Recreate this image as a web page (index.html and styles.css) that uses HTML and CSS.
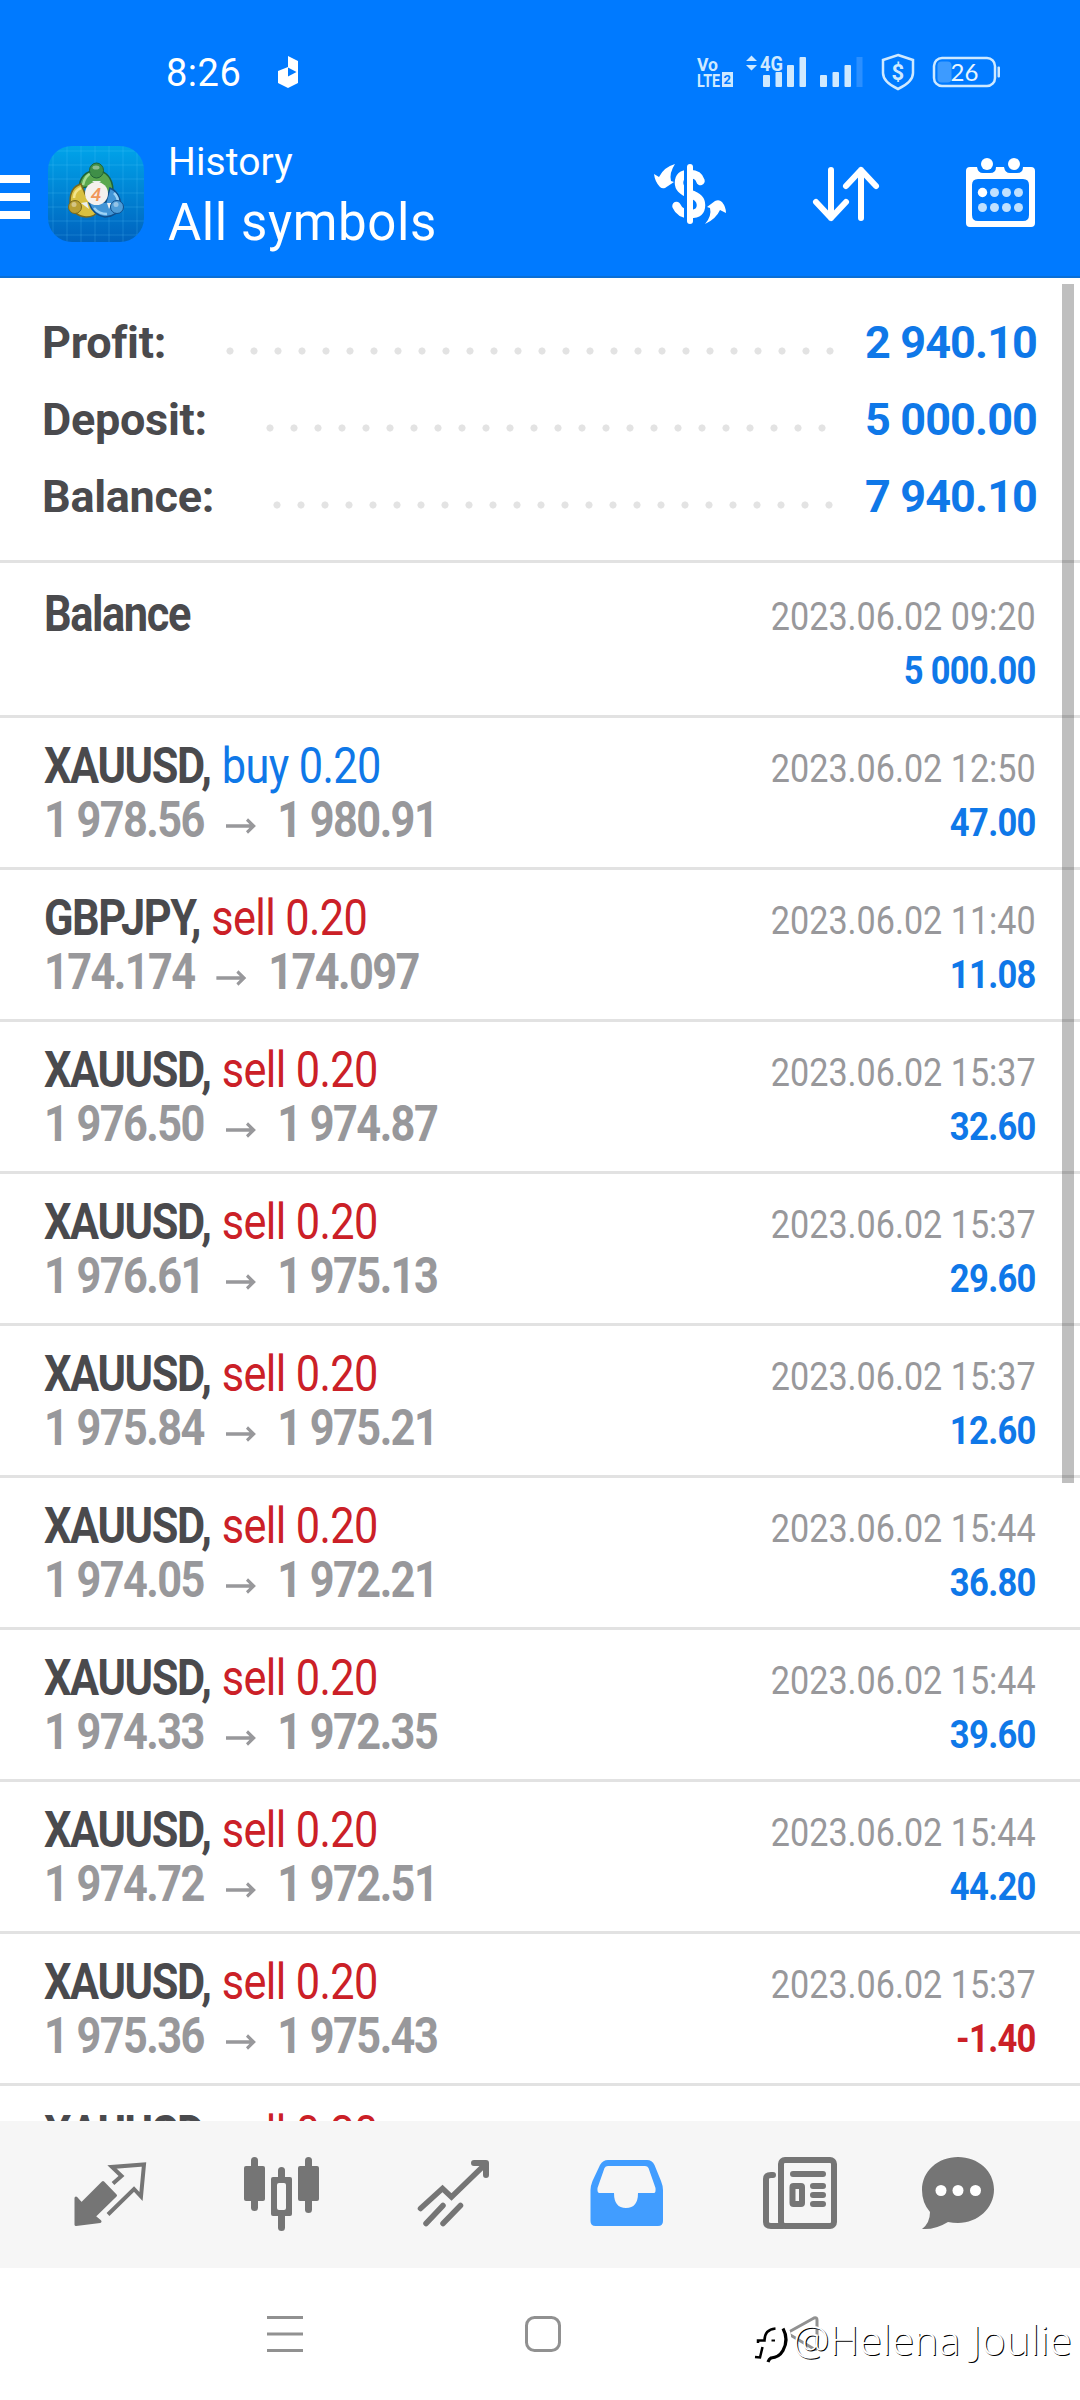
FILE: index.html
```html
<!DOCTYPE html>
<html lang="en">
<head>
<meta charset="utf-8">
<title>History</title>
<link rel="stylesheet" href="styles.css">
</head>
<body>
<div class="screen">
  <header class="header">
    <div class="status">
      <span class="clock">8:26</span>
      <svg class="status-app" viewBox="276 54 24 36" width="24" height="36"><path fill="#fff" d="M288 56l10 5v22l-10 5-10-5V71l10-4z"/><path fill="#007aff" d="M288 67.500l8.500 4.500-8.500 4.500z"/></svg>
      <svg class="status-icons" viewBox="690 50 320 44" width="320" height="44">
        <g fill="#cfe9ff" font-family="Roboto, sans-serif" font-weight="700">
          <text x="697" y="70.500" font-size="18" textLength="21" lengthAdjust="spacingAndGlyphs">Vo</text>
          <text x="697" y="86.500" font-size="19" textLength="23" lengthAdjust="spacingAndGlyphs">LTE</text>
          <rect x="722" y="72" width="11" height="15"/>
          <text x="723.500" y="84" font-size="13" fill="#007aff">2</text>
          <path d="M746 61l5.500-5.500L757 61zM746 65l5.500 5.500L757 65z"/>
          <text x="760" y="70.500" font-size="21" textLength="23" lengthAdjust="spacingAndGlyphs">4G</text>
          <rect x="763" y="75" width="7" height="12" rx="1"/><rect x="775.500" y="72" width="6.500" height="15" rx="1"/><rect x="787" y="65" width="7" height="22" rx="1"/><rect x="799.500" y="57" width="6.500" height="30" rx="1"/>
          <rect x="820" y="75" width="7" height="12" rx="1"/><rect x="832.500" y="72" width="6.500" height="15" rx="1"/><rect x="844.500" y="65" width="6.500" height="22" rx="1"/><rect x="856.500" y="57" width="6" height="30" fill="#2b8fff"/>
          <text x="891.500" y="80" font-size="22">$</text>
        </g>
        <path fill="none" stroke="#cfe9ff" stroke-width="2.500" d="M898 55l15 5v13q0 9-15 16-15-7-15-16V60z"/>
        <rect x="934" y="58" width="61" height="28" rx="8" fill="none" stroke="#cfe9ff" stroke-width="2.500"/>
        <rect x="937.500" y="61.500" width="14" height="21" rx="4" fill="#3d9bff"/>
        <rect x="997.500" y="66.500" width="2.500" height="11" rx="1" fill="#cfe9ff"/>
        <text x="950.500" y="81" font-size="24" fill="#e8f6ff" font-family="Lato, sans-serif">26</text>
      </svg>
    </div>
    <div class="toolbar">
      <svg class="menu" viewBox="0 170 30 50" width="30" height="50"><path fill="#fff" d="M0 174h30v8H0zM0 192h30v8H0zM0 210h30v8H0z"/></svg>
      <svg class="logo" viewBox="0 0 96 96" width="96" height="96">
        <defs>
          <linearGradient id="sky" x1="0" y1="0" x2="0" y2="1"><stop offset="0" stop-color="#00a4ea"/><stop offset="1" stop-color="#0062bd"/></linearGradient>
          <pattern id="grid" width="14" height="14" patternUnits="userSpaceOnUse"><path d="M0 5H14M5 0V14" stroke="#5fd0ff" stroke-opacity=".2"/></pattern>
        </defs>
        <rect width="96" height="96" rx="24" fill="url(#sky)"/><rect width="96" height="96" rx="24" fill="url(#grid)"/>
        <path fill="#5aa84f" stroke="#1f6338" stroke-width="1.500" d="M31 42q1-16 17-18 16 2 17 20 0 8-7 13L48 40z"/>
        <path fill="#d9c040" stroke="#77691f" stroke-width="1.500" d="M33 38q-11 3-11 18 3 14 16 15 9 0 12-6L38 50z"/>
        <path fill="#4295d6" stroke="#104f8c" stroke-width="1.500" d="M62 42q10 4 11 18-3 10-16 11-12-2-16-14l17-1z"/>
        <path fill="none" stroke="#a6dc93" stroke-width="2.500" d="M35 39q2-10 9-12"/><path fill="none" stroke="#f3e58a" stroke-width="2.500" d="M33 42q-7 3-7 10"/><path fill="none" stroke="#9bd2f5" stroke-width="2.500" d="M46 62q5 6 13 6M66 47q4 4 4 9"/>
        <path fill="#e9eef0" d="M44 35h9l-4 4zM33 57l6-1 2 7zM59 57l5 0-3 6z"/>
        <ellipse cx="48.500" cy="24.500" rx="7" ry="7.500" fill="#3f8f48" stroke="#1f6338"/><circle cx="27" cy="61" r="6.500" fill="#b99f34" stroke="#77691f"/><circle cx="69" cy="61" r="6.500" fill="#4f9dd8" stroke="#104f8c"/>
        <g fill="#fff" fill-opacity=".4"><ellipse cx="48" cy="21.500" rx="3.500" ry="2"/><circle cx="26" cy="58.500" r="2.500"/><circle cx="68" cy="58.500" r="2.500"/></g>
        <circle cx="48.500" cy="47.500" r="11.500" fill="#f5f1ee"/>
        <text x="48" y="54.500" text-anchor="middle" font-family="Roboto, sans-serif" font-style="italic" font-weight="500" font-size="19" fill="#f0965a">4</text>
      </svg>
      <div class="titles"><div class="section">History</div><div class="filter">All symbols</div></div>
      <svg class="actions" viewBox="650 150 400 90" width="400" height="90" fill="none" stroke="#fff" stroke-linecap="round" stroke-linejoin="round">
        <path stroke-width="8.500" d="M700.500 181q-2-7-10.500-7-11 0-11 9 0 7 11 11 11 3 11 11 0 9-11 9-10 0-13.500-8"/>
        <path stroke="#007aff" stroke-width="3" stroke-linecap="butt" d="M685.500 166v56"/>
        <path stroke-width="6" d="M690 167v54"/>
        <path fill="#fff" stroke="none" d="M675 164q-6 9-4 17l3 1-9 6q-3 1-5-1-5-5-6-13l5 3q5-10 16-13zM705 224q7-8 5-16l-3-1 8-6q4-2 7 1 4 5 4 11l-6-3q-4 9-15 14z"/>
        <path stroke-width="6" d="M831 170v48M816 202l15 16 15-16M861 218v-48M846 186l15-16 15 16"/>
        <path fill="#fff" stroke="none" fill-rule="evenodd" d="M970 167h7q1 6 6 6h7q6 0 6-6h8q1 6 6 6h7q6 0 6-6h8q4 0 4 4v52q0 4-4 4h-61q-4 0-4-4v-52q0-4 4-4zM978 179q-6 0-6 6v30q0 6 6 6h45q6 0 6-6v-30q0-6-6-6z"/>
        <g stroke="none" fill="#fff"><circle cx="987" cy="164" r="6"/><circle cx="1014" cy="164" r="6"/><circle cx="982.500" cy="192.500" r="4.700"/></g>
        <g stroke="none" fill="#bfe0ff"><circle cx="994.500" cy="192.500" r="4.500"/><circle cx="1006.500" cy="192.500" r="4.500"/><circle cx="1018.500" cy="192.500" r="4.500"/><circle cx="982.500" cy="207.500" r="4.500"/><circle cx="994.500" cy="207.500" r="4.500"/><circle cx="1006.500" cy="207.500" r="4.500"/><circle cx="1018.500" cy="207.500" r="4.500"/></g>
      </svg>
    </div>
  </header>

  <main class="content">
    <section class="summary">
      <div class="sum"><span class="label">Profit:</span><i class="dots dots-profit"></i><b class="total">2 940.10</b></div>
      <div class="sum"><span class="label">Deposit:</span><i class="dots dots-deposit"></i><b class="total">5 000.00</b></div>
      <div class="sum"><span class="label">Balance:</span><i class="dots dots-balance"></i><b class="total">7 940.10</b></div>
    </section>
    <section class="deals">
      <div class="deal"><div class="left"><div class="symbol">Balance</div></div><div class="right"><div class="date">2023.06.02 09:20</div><div class="profit">5 000.00</div></div></div>
      <div class="deal"><div class="left"><div class="symbol">XAUUSD, <span class="buy">buy 0.20</span></div><div class="prices">1 978.56<svg class="arrow" viewBox="0 0 36 16"><path d="M1 8h32M25 1.500l7.500 6.500-7.500 6.500"/></svg>1 980.91</div></div><div class="right"><div class="date">2023.06.02 12:50</div><div class="profit">47.00</div></div></div>
      <div class="deal"><div class="left"><div class="symbol">GBPJPY, <span class="sell">sell 0.20</span></div><div class="prices">174.174<svg class="arrow" viewBox="0 0 36 16"><path d="M1 8h32M25 1.500l7.500 6.500-7.500 6.500"/></svg>174.097</div></div><div class="right"><div class="date">2023.06.02 11:40</div><div class="profit">11.08</div></div></div>
      <div class="deal"><div class="left"><div class="symbol">XAUUSD, <span class="sell">sell 0.20</span></div><div class="prices">1 976.50<svg class="arrow" viewBox="0 0 36 16"><path d="M1 8h32M25 1.500l7.500 6.500-7.500 6.500"/></svg>1 974.87</div></div><div class="right"><div class="date">2023.06.02 15:37</div><div class="profit">32.60</div></div></div>
      <div class="deal"><div class="left"><div class="symbol">XAUUSD, <span class="sell">sell 0.20</span></div><div class="prices">1 976.61<svg class="arrow" viewBox="0 0 36 16"><path d="M1 8h32M25 1.500l7.500 6.500-7.500 6.500"/></svg>1 975.13</div></div><div class="right"><div class="date">2023.06.02 15:37</div><div class="profit">29.60</div></div></div>
      <div class="deal"><div class="left"><div class="symbol">XAUUSD, <span class="sell">sell 0.20</span></div><div class="prices">1 975.84<svg class="arrow" viewBox="0 0 36 16"><path d="M1 8h32M25 1.500l7.500 6.500-7.500 6.500"/></svg>1 975.21</div></div><div class="right"><div class="date">2023.06.02 15:37</div><div class="profit">12.60</div></div></div>
      <div class="deal"><div class="left"><div class="symbol">XAUUSD, <span class="sell">sell 0.20</span></div><div class="prices">1 974.05<svg class="arrow" viewBox="0 0 36 16"><path d="M1 8h32M25 1.500l7.500 6.500-7.500 6.500"/></svg>1 972.21</div></div><div class="right"><div class="date">2023.06.02 15:44</div><div class="profit">36.80</div></div></div>
      <div class="deal"><div class="left"><div class="symbol">XAUUSD, <span class="sell">sell 0.20</span></div><div class="prices">1 974.33<svg class="arrow" viewBox="0 0 36 16"><path d="M1 8h32M25 1.500l7.500 6.500-7.500 6.500"/></svg>1 972.35</div></div><div class="right"><div class="date">2023.06.02 15:44</div><div class="profit">39.60</div></div></div>
      <div class="deal"><div class="left"><div class="symbol">XAUUSD, <span class="sell">sell 0.20</span></div><div class="prices">1 974.72<svg class="arrow" viewBox="0 0 36 16"><path d="M1 8h32M25 1.500l7.500 6.500-7.500 6.500"/></svg>1 972.51</div></div><div class="right"><div class="date">2023.06.02 15:44</div><div class="profit">44.20</div></div></div>
      <div class="deal"><div class="left"><div class="symbol">XAUUSD, <span class="sell">sell 0.20</span></div><div class="prices">1 975.36<svg class="arrow" viewBox="0 0 36 16"><path d="M1 8h32M25 1.500l7.500 6.500-7.500 6.500"/></svg>1 975.43</div></div><div class="right"><div class="date">2023.06.02 15:37</div><div class="profit loss">-1.40</div></div></div>
      <div class="deal"><div class="left"><div class="symbol">XAUUSD, <span class="sell">sell 0.20</span></div></div></div>
    </section>
    <div class="scrollbar"></div>
  </main>

  <nav class="tabs">
    <svg viewBox="24 2121 172 147"><path fill="#757575" stroke="#757575" stroke-width="3" stroke-linejoin="round" d="M76 2198l5.500 6L103 2182.500l12.500 13L94 2216.500l6 5-24 3z"/><path fill="none" stroke="#757575" stroke-width="4" d="M113 2183.500l8.500-7.500-9.500-9 32-2.500-3 32-7-7.500-26 25.500"/></svg>
    <svg viewBox="196 2121 172 147" fill="#757575"><rect x="244" y="2166" width="21" height="35" rx="2"/><rect x="251" y="2157" width="7" height="54" rx="3.500"/><rect x="298" y="2166" width="21" height="35" rx="2"/><rect x="305" y="2157" width="7" height="56" rx="3.500"/><rect x="278" y="2167" width="7" height="64" rx="3.500"/><rect x="271" y="2177" width="21" height="39" rx="2"/><rect x="277" y="2183" width="9" height="27" rx="2" fill="#f7f7f7"/></svg>
    <svg viewBox="368 2121 172 147" fill="none" stroke="#757575" stroke-width="5.500" stroke-linecap="round"><path d="M420.500 2208.500l22-20 9 8.500 34-33M426 2223.500l17-18M443 2223.500l17.500-18"/><path stroke-width="6" stroke-linejoin="round" d="M474 2163h12v12"/></svg>
    <svg viewBox="540 2121 172 147"><path fill="#419dff" fill-rule="evenodd" d="M608 2160h39q5 0 7.500 5l6.500 16q2 5 2 9v31q0 5-5 5h-62.500q-5 0-5-5v-31q0-4 2-9l7.500-16q3-5 8-5zM608 2166q-2.500 0-3.500 2l-7 20q-.5 5 2 5H614q0 15 12 15t12-15h16q2 0 1.500-5l-7-20q-1-2-3.500-2z"/></svg>
    <svg viewBox="712 2121 172 147" fill="none" stroke="#757575" stroke-width="6"><rect x="781" y="2160" width="53" height="66" rx="4"/><path d="M773 2175h-2q-5 0-5 4v43q0 4 5 4h12M793 2174h30M813 2186h10M813 2195h10M813 2204h10" stroke-linecap="round"/><rect x="792.500" y="2186" width="9.500" height="18" rx="1"/></svg>
    <svg viewBox="884 2121 172 147"><path fill="#757575" d="M958 2157c20 0 36 14 36 32.500s-16 33.500-36 33.500q-5 0-10-1-13 8-26 7 8-6 8-17-8-9-8-22c0-19 16-33 36-33z"/><g fill="#fff"><circle cx="941" cy="2190.500" r="5.500"/><circle cx="958" cy="2190.500" r="5.500"/><circle cx="975.500" cy="2190.500" r="5.500"/></g></svg>
  </nav>
  <footer class="system">
    <svg viewBox="0 2268 1080 132" width="1080" height="132" fill="none" stroke="#919191" stroke-width="3"><path d="M267 2317.500h36M267 2334h36M267 2350.500h36"/><rect x="526.500" y="2317.500" width="33" height="33" rx="8"/><path stroke-linejoin="round" d="M787 2333l27-15q3-1 3 2v27q0 3-3 2z"/></svg>
    <div class="watermark">
      <svg viewBox="0 0 38 50" width="38" height="50" fill="none" stroke="#000"><path stroke="#fff" stroke-width="5" d="M33 14q6 12-1 25"/><path stroke-width="2.500" d="M5 29v-2.500h6.500q0-11 11-12M9.500 33l-2.500 10.500-5-.5"/><path stroke-width="3.200" d="M30 14.500q6 11 0 22-4 7-12 7.500-2 1-3 4"/><path d="M18.500 26.500h3.500" stroke-width="2"/></svg>
      <span>@Helena Joulie</span>
    </div>
  </footer>
</div>
</body>
</html>
```
FILE: styles.css
```css
* { box-sizing: border-box; }
body { margin: 0; background: #fff; font-family: Roboto, sans-serif; }
svg { display: block; flex: none; }
.screen { width: 1080px; height: 2400px; display: flex; flex-direction: column; overflow: hidden; }

.header { height: 278px; background: #007aff; border-bottom: 2px solid #0a6fd6; color: #fff; }
.status { height: 144px; display: flex; align-items: center; padding-left: 166px; }
.clock { width: 110px; font-size: 38px; line-height: 44px; padding-top: 2px; letter-spacing: .5px; }
.status-icons { margin-left: 390px; }
.toolbar { height: 98px; display: flex; align-items: center; margin-top: 1px; }
.menu { margin-top: 3px; }
.logo { margin-left: 18px; }
.titles { width: 480px; padding-left: 24px; white-space: nowrap; }
.section { font-size: 39px; line-height: 46px; margin-top: 3px; letter-spacing: .1px; }
.filter { font-size: 51px; line-height: 60px; margin-top: 8px; letter-spacing: .6px; }
.actions { margin: 2px 0 0 26px; }

.content { position: relative; height: 1843px; overflow: hidden; background: #fff; }
.summary { height: 285px; padding: 26px 43px 0 42px; border-bottom: 3px solid #e2e2e2; }
.sum { height: 77px; display: flex; align-items: center; font-size: 45px; line-height: 77px; }
.label { color: #4a4a4d; font-weight: 700; letter-spacing: -.3px; }
.dots { height: 8px; margin: 17px 0 0 auto; background: radial-gradient(circle, #e3e3e3 3.200px, transparent 3.900px) 0 0 / 24px 8px; }
.dots-profit { width: 624px; margin-right: 23px; }
.dots-deposit { width: 576px; margin-right: 31px; }
.dots-balance { width: 576px; margin-right: 24px; }
.total { color: #0f78e8; font-weight: 700; letter-spacing: -.9px; }

.deal { height: 152px; display: flex; justify-content: space-between; padding: 24px 44px 0; white-space: nowrap; }
.deal + .deal { box-shadow: inset 0 3px #e2e2e2; }
.left { transform: scaleX(.875); transform-origin: left; }
.right { transform: scaleX(.875); transform-origin: right; text-align: right; }
.symbol { font-size: 49.500px; font-weight: 700; line-height: 54px; height: 54px; color: #4a4a4d; letter-spacing: -1.600px; }
.buy, .sell { font-weight: 400; letter-spacing: -.7px; margin-left: 2px; }
.buy { color: #0f78e8; }
.sell { color: #cb2027; }
.prices { display: flex; align-items: center; font-size: 49.500px; font-weight: 700; line-height: 54px; color: #98989b; letter-spacing: -1.800px; }
.arrow { width: 36px; height: 16px; margin: 11px 24px 0 24px; fill: none; stroke: #98989b; stroke-width: 3.500; }
.date { font-size: 39px; line-height: 60px; height: 54px; color: #98989b; }
.profit { font-size: 39.500px; line-height: 60px; font-weight: 700; color: #0f78e8; letter-spacing: -.8px; }
.loss { color: #cb2027; }
.scrollbar { position: absolute; left: 1062px; top: 6px; width: 12px; height: 1199px; background: rgba(0, 0, 0, .25); }

.tabs { height: 147px; padding-left: 24px; display: flex; background: #f6f6f6; }
.tabs svg { width: 172px; height: 147px; }
.system { position: relative; height: 132px; background: #fff; }
.watermark { position: absolute; left: 753px; top: 46px; display: flex; align-items: center; gap: 2px; font: 300 41px/50px "Open Sans", sans-serif; letter-spacing: .2px; color: #fff; text-shadow: 1px 1px 0 #000; white-space: nowrap; }
```
